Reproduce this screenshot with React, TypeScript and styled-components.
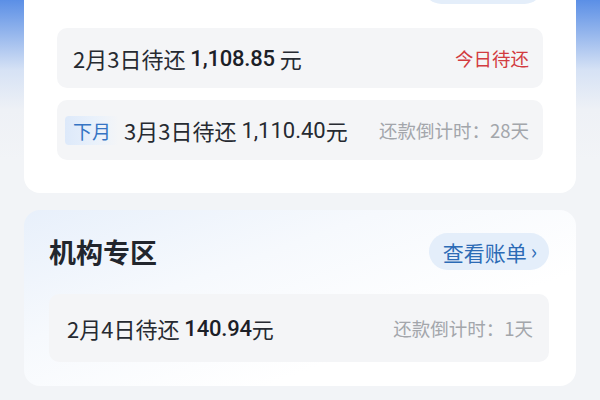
import React from "react";
import styled, { createGlobalStyle } from "styled-components";

interface Bill {
    tag?: string;
    date: string;
    amount: string;
    unit: string;
    strong?: boolean;
    note: string;
    urgent?: boolean;
}

const current: Bill[] = [
    { date: "2月3日待还", amount: "1,108.85", unit: " 元", strong: true, note: "今日待还", urgent: true },
    { tag: "下月", date: "3月3日待还", amount: "1,110.40", unit: "元", note: "还款倒计时：28天" },
];

const agency: Bill[] = [
    { date: "2月4日待还", amount: "140.94", unit: "元", strong: true, note: "还款倒计时：1天" },
];

const GlobalStyle = createGlobalStyle`
    html, body {
        margin: 0;
        height: 100%;
        overflow: hidden;
    }
    body {
        font-family: Roboto, "Noto Sans CJK SC", sans-serif;
        background: linear-gradient(
            to bottom,
            #5b8fe6 0px,
            #8fb2ec 30px,
            #d6e2f5 70px,
            #eef1f6 110px,
            #f2f4f7 160px
        );
        color: #23272e;
    }
`;

const Page = styled.div`
    display: flex;
    flex-direction: column;
    gap: 17px;
    padding: 0 24px;
    margin-top: -56px;
`;

const Card = styled.section<{ $padX: number; $padR?: number; $padB: number; $tinted?: boolean }>`
    display: flex;
    flex-direction: column;
    gap: 12px;
    padding: 23px ${({ $padX, $padR }) => $padR ?? $padX}px ${({ $padB }) => $padB}px
        ${({ $padX }) => $padX}px;
    border-radius: 16px;
    background: ${({ $tinted }) =>
        $tinted
            ? "linear-gradient(160deg, #e8f0fb 0%, #f6f9fd 35%, #ffffff 70%)"
            : "#ffffff"};
`;

const Header = styled.div`
    display: flex;
    align-items: center;
    justify-content: space-between;
    height: 37px;
    margin-bottom: 12px;
`;

const Title = styled.h2`
    margin: 0;
    font-family: "Noto Sans CJK SC", sans-serif;
    font-size: 27px;
    font-weight: 700;
    color: #22262d;
`;

const Pill = styled.button`
    display: flex;
    align-items: center;
    gap: 4px;
    height: 37px;
    padding: 0 12px 0 14px;
    border: none;
    border-radius: 19px;
    background: #e4eefa;
    color: #2c6bb6;
    font-family: "Noto Sans CJK SC", sans-serif;
    font-size: 21px;
`;

const Chevron = styled.span`
    font-size: 21px;
    line-height: 1;
    transform: translateY(-1px);
`;

const Row = styled.div<{ $tall?: boolean }>`
    display: flex;
    align-items: center;
    justify-content: space-between;
    height: ${({ $tall }) => ($tall ? 68 : 60)}px;
    padding: 0 ${({ $tall }) => ($tall ? 16 : 14)}px 0 ${({ $tall }) => ($tall ? 18 : 16)}px;
    border-radius: 10px;
    background: #f4f5f7;
`;

const Main = styled.div`
    display: flex;
    align-items: center;
    font-size: 22px;
    color: #262a31;
    white-space: pre;
`;

const Tag = styled.span`
    margin: 0 5px 0 -8px;
    padding: 1px 8px;
    border-radius: 4px;
    background: linear-gradient(90deg, #dde9fa 0%, #e9f1fb 55%, rgba(244, 245, 247, 0) 100%);
    color: #3574c4;
    font-family: "Noto Sans CJK SC", sans-serif;
    font-size: 19px;
`;

const DateText = styled.span`
    font-family: "Noto Sans CJK SC", sans-serif;
`;

const Amount = styled.span<{ $strong?: boolean }>`
    font-family: Roboto, sans-serif;
    font-weight: ${({ $strong }) => ($strong ? 500 : 400)};
    color: ${({ $strong }) => ($strong ? "#1c2027" : "#262a31")};
    letter-spacing: ${({ $strong }) => ($strong ? "-0.2px" : "0")};
`;

const Unit = styled.span`
    font-family: "Noto Sans CJK SC", sans-serif;
`;

const Note = styled.span<{ $urgent?: boolean }>`
    font-family: "Noto Sans CJK SC", sans-serif;
    font-size: 18.5px;
    color: ${({ $urgent }) => ($urgent ? "#d23b40" : "#a3a6ab")};
`;

const BillRow: React.FC<{ bill: Bill; tall?: boolean }> = ({ bill, tall }) => (
    <Row $tall={tall}>
        <Main>
            {bill.tag && <Tag>{bill.tag}</Tag>}
            <DateText>{bill.date} </DateText>
            <Amount $strong={bill.strong}>{bill.amount}</Amount>
            <Unit>{bill.unit}</Unit>
        </Main>
        <Note $urgent={bill.urgent}>{bill.note}</Note>
    </Row>
);

const App: React.FC = () => {
    return (
        <>
            <GlobalStyle />
            <Page>
                <Card $padX={33} $padB={33}>
                    <Header>
                        <Title>本月待还</Title>
                        <Pill>
                            全部账单
                            <Chevron>›</Chevron>
                        </Pill>
                    </Header>
                    {current.map((bill) => (
                        <BillRow key={bill.date} bill={bill} />
                    ))}
                </Card>
                <Card $padX={25} $padR={27} $padB={24} $tinted>
                    <Header>
                        <Title>机构专区</Title>
                        <Pill>
                            查看账单
                            <Chevron>›</Chevron>
                        </Pill>
                    </Header>
                    {agency.map((bill) => (
                        <BillRow key={bill.date} bill={bill} tall />
                    ))}
                </Card>
            </Page>
        </>
    );
};

export default App;
